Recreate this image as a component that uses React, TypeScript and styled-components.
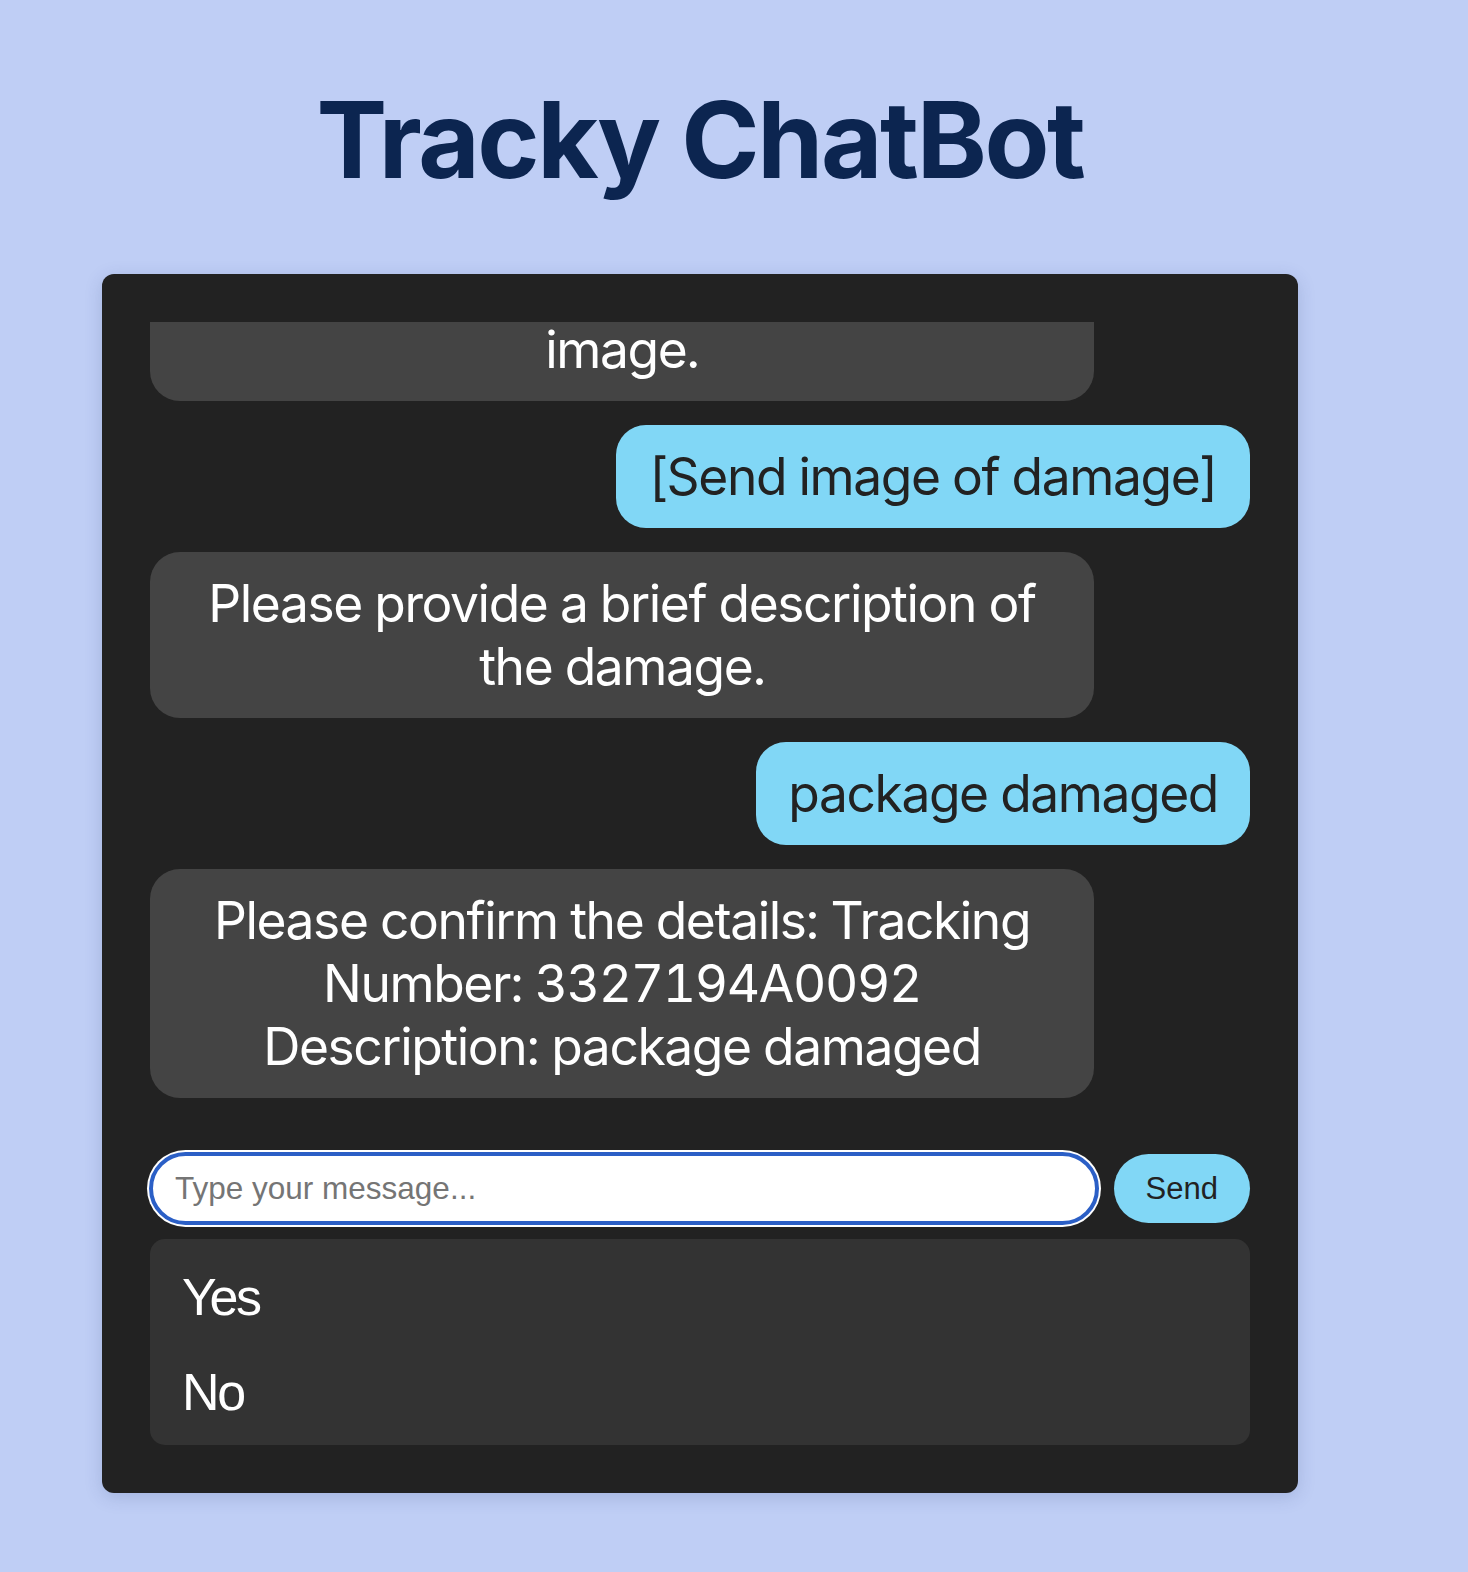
import React from "react";
import styled, { createGlobalStyle } from "styled-components";

const GlobalStyle = createGlobalStyle`
  html, body {
    margin: 0;
    padding: 0;
    background: #bfcef5;
  }
  body {
    min-height: 100vh;
    font-family: Inter, "Noto Sans", sans-serif;
  }
`;

const Page = styled.main`
  padding: 76px 0 79px 102px;
`;

const Column = styled.div`
  width: 1196px;
  display: flex;
  flex-direction: column;
`;

const Title = styled.h1`
  margin: 0 0 70px;
  text-align: center;
  font-family: Inter, "Noto Sans", sans-serif;
  font-weight: 700;
  font-size: 106px;
  line-height: 128px;
  letter-spacing: -2.4px;
  color: #0c2550;
`;

const Card = styled.section`
  background: #222222;
  border-radius: 12px;
  padding: 48px;
  box-shadow: 0 4px 18px rgba(40, 60, 120, 0.18);
  display: flex;
  flex-direction: column;
`;

const Messages = styled.div`
  height: 776px;
  overflow: hidden;
  display: flex;
  flex-direction: column;
  justify-content: flex-end;
  gap: 24px;
`;

const Bubble = styled.div<{ $from: "bot" | "user" }>`
  flex-shrink: 0;
  align-self: ${(p) => (p.$from === "bot" ? "flex-start" : "flex-end")};
  max-width: 80%;
  padding: 20px 32px;
  border-radius: 30px;
  background: ${(p) => (p.$from === "bot" ? "#444444" : "#81d7f6")};
  color: ${(p) => (p.$from === "bot" ? "#ffffff" : "#222222")};
  font-family: Inter, "Noto Sans", sans-serif;
  font-size: 51.5px;
  line-height: 63px;
  letter-spacing: -1.4px;
  font-variant-numeric: tabular-nums;
  text-align: center;
  white-space: pre-line;
`;

const InputRow = styled.form`
  margin: 54px 0 0;
  display: flex;
  align-items: center;
  gap: 15px;
`;

const MessageInput = styled.input`
  flex: 1;
  min-width: 0;
  height: 73px;
  box-sizing: border-box;
  margin-left: -1px;
  padding: 0 22px;
  border: 4px solid #2b5fc6;
  border-radius: 37px;
  box-shadow: 0 0 0 2px #ffffff;
  outline: none;
  background: #ffffff;
  color: #222222;
  font-family: "Liberation Sans", Arial, sans-serif;
  font-size: 31.5px;

  &::placeholder {
    color: #757575;
  }
`;

const SendButton = styled.button`
  height: 69px;
  padding: 0 32px;
  border: none;
  border-radius: 35px;
  background: #81d7f6;
  color: #222222;
  font-family: "Liberation Sans", Arial, sans-serif;
  font-size: 31px;
  cursor: pointer;
`;

const Options = styled.ul`
  list-style: none;
  margin: 14px 0 0;
  padding: 11px 32px 5px;
  background: #333333;
  border-radius: 15px;
`;

const Option = styled.li`
  padding: 20px 0;
  color: #ffffff;
  font-family: "Liberation Sans", Arial, sans-serif;
  font-size: 52px;
  line-height: 55px;
  letter-spacing: -2.4px;
  cursor: pointer;
`;

type Msg = { from: "bot" | "user"; text: string };

const messages: Msg[] = [
  {
    from: "bot",
    text: "Thanks. Please upload a clear photo of the damaged package as an\nimage.",
  },
  { from: "user", text: "[Send image of damage]" },
  { from: "bot", text: "Please provide a brief description of the damage." },
  { from: "user", text: "package damaged" },
  {
    from: "bot",
    text: "Please confirm the details: Tracking Number: 3327194A0092\nDescription: package damaged",
  },
];

const options = ["Yes", "No"];

export default function App() {
  return (
    <>
      <GlobalStyle />
      <Page>
        <Column>
          <Title>Tracky ChatBot</Title>
          <Card>
            <Messages>
              {messages.map((m, i) => (
                <Bubble key={i} $from={m.from}>
                  {m.text}
                </Bubble>
              ))}
            </Messages>
            <InputRow onSubmit={(e) => e.preventDefault()}>
              <MessageInput type="text" placeholder="Type your message..." />
              <SendButton type="submit">Send</SendButton>
            </InputRow>
            <Options>
              {options.map((o) => (
                <Option key={o}>{o}</Option>
              ))}
            </Options>
          </Card>
        </Column>
      </Page>
    </>
  );
}
